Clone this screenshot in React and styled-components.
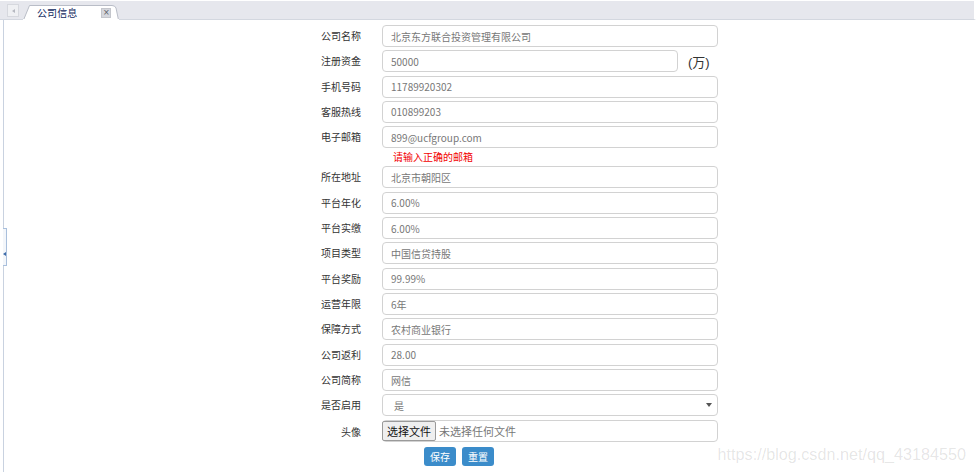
import React from 'react';
import styled, { createGlobalStyle } from 'styled-components';

const GlobalStyle = createGlobalStyle`
  html, body {
    margin: 0;
    padding: 0;
    background: #fff;
  }
  body {
    font-family: "Noto Sans CJK SC", "Noto Sans", sans-serif;
    font-size: 10px;
    color: #333;
  }
`;

const Page = styled.div`
  width: 976px;
  height: 472px;
  display: flex;
  flex-direction: column;
  position: relative;
  overflow: hidden;
`;

const TabBar = styled.div`
  height: 19px;
  margin-top: 1px;
  background: #e6e7ed;
  border-bottom: 1px solid #d3d7df;
  border-right: 2px solid #fff;
  display: flex;
  align-items: flex-end;
  padding-left: 7px;
  box-sizing: border-box;
`;

const ScrollBtn = styled.div`
  width: 10px;
  height: 11px;
  margin-bottom: 2px;
  border: 1px solid #d6d8de;
  background: #eff0f3;
  display: flex;
  align-items: center;
  justify-content: center;
  &::before {
    content: '';
    border-style: solid;
    border-width: 2.5px 3px 2.5px 0;
    border-color: transparent #b5b8c0 transparent transparent;
  }
`;

const Tab = styled.div`
  position: relative;
  width: 96px;
  height: 15px;
  margin-left: 4px;
  margin-bottom: -1px;
  display: flex;
  align-items: center;
  padding-left: 14px;
  box-sizing: border-box;
  svg.shape {
    position: absolute;
    left: 0;
    top: 0;
  }
`;

const TabTitle = styled.span`
  position: relative;
  font-size: 10px;
  line-height: 14px;
  color: #10295e;
  letter-spacing: 0.1px;
`;

const CloseBtn = styled.span`
  position: relative;
  width: 8px;
  height: 8px;
  margin-left: 24px;
  background: #d5d7dd;
  border: 1px solid #c4c6cc;
  display: flex;
  align-items: center;
  justify-content: center;
  font-size: 8px;
  line-height: 8px;
  color: #5a5d66;
  font-family: "DejaVu Sans", sans-serif;
`;

const Body = styled.div`
  flex: 1;
  display: flex;
  position: relative;
`;

const Rail = styled.div`
  width: 3px;
  border-right: 1px solid #c9d2e0;
  flex-shrink: 0;
`;

const RailHandle = styled.div`
  position: absolute;
  left: 3px;
  top: 208px;
  width: 3px;
  height: 36px;
  border: 1px solid #a9bfdc;
  border-left: none;
  background: #f3f6fa;
  &::after {
    content: '';
    position: absolute;
    left: 0;
    top: 23px;
    border-style: solid;
    border-width: 2.5px 3px 2.5px 0;
    border-color: transparent #3d6aa8 transparent transparent;
  }
`;

const Form = styled.form`
  margin: 5px 0 0 277px;
  display: grid;
  grid-template-columns: 80px 336px;
  column-gap: 21px;
  row-gap: 3.33px;
  align-content: start;
`;

const Label = styled.label`
  text-align: right;
  font-size: 10px;
  line-height: 22px;
  color: #333;
  align-self: ${p => (p.top ? 'start' : 'center')};
  margin-top: ${p => (p.top ? '1px' : '0')};
`;

const Field = styled.div`
  display: flex;
  align-items: center;
  gap: 10px;
`;

const Input = styled.div`
  width: ${p => p.w || '336px'};
  height: 22px;
  box-sizing: border-box;
  border: 1px solid #d2d2d2;
  border-radius: 4px;
  padding-left: 8px;
  display: flex;
  align-items: center;
  font-size: 10px;
  color: #777;
  background: #fff;
`;

const Unit = styled.span`
  font-size: 13px;
  color: #333;
  font-family: "Liberation Sans", "Noto Sans CJK SC", sans-serif;
`;

const ErrorText = styled.div`
  grid-column: 2;
  padding-left: 11px;
  height: 11.5px;
  margin-top: -1px;
  margin-bottom: 1px;
  font-size: 10px;
  line-height: 11px;
  color: #f20000;
`;

const Select = styled(Input)`
  padding-left: 11px;
  justify-content: space-between;
  padding-right: 5px;
  &::after {
    content: '';
    border-style: solid;
    border-width: 4px 3px 0 3px;
    border-color: #555 transparent transparent transparent;
  }
`;

const FileBox = styled(Input)`
  padding-left: 0;
  gap: 3px;
`;

const FileBtn = styled.span`
  height: 20px;
  box-sizing: border-box;
  padding: 0 4px;
  margin-left: -1px;
  display: flex;
  align-items: center;
  background: #efefef;
  border: 1px solid #9a9a9a;
  border-radius: 2px;
  font-size: 11px;
  color: #111;
`;

const FileHint = styled.span`
  font-size: 11px;
  color: #777;
`;

const Actions = styled.div`
  grid-column: 2;
  display: flex;
  gap: 6px;
  padding-left: 42px;
  margin-top: 1px;
`;

const Button = styled.button`
  height: 19px;
  padding: 0 6px;
  border: none;
  border-radius: 3px;
  background: #3b8cca;
  color: #fff;
  font-family: inherit;
  font-size: 10px;
  line-height: 19px;
`;

const Watermark = styled.div`
  position: absolute;
  right: 10px;
  bottom: 8px;
  font-family: "Liberation Sans", Arial, sans-serif;
  font-size: 16.2px;
  color: rgba(0, 0, 0, 0.11);
`;

const rows = [
  ['公司名称', '北京东方联合投资管理有限公司'],
  ['注册资金', '50000', 'unit'],
  ['手机号码', '11789920302'],
  ['客服热线', '010899203'],
  ['电子邮箱', '899@ucfgroup.com', 'error'],
  ['所在地址', '北京市朝阳区'],
  ['平台年化', '6.00%'],
  ['平台实缴', '6.00%'],
  ['项目类型', '中国信贷持股'],
  ['平台奖励', '99.99%'],
  ['运营年限', '6年'],
  ['保障方式', '农村商业银行'],
  ['公司返利', '28.00'],
  ['公司简称', '网信'],
];

export default function App() {
  return (
    <Page>
      <GlobalStyle />
      <TabBar>
        <ScrollBtn />
        <Tab>
          <svg className="shape" width="96" height="15" viewBox="0 0 96 15">
            <path d="M0.5 15 L6.5 0.5 L89 0.5 Q92 0.5 93 3 L95.5 15 Z" fill="#fff" stroke="#b9bdc7" />
            <rect x="0" y="14" width="96" height="1" fill="#fff" />
          </svg>
          <TabTitle>公司信息</TabTitle>
          <CloseBtn>×</CloseBtn>
        </Tab>
      </TabBar>
      <Body>
        <Rail />
        <RailHandle />
        <Form>
          {rows.map(([label, value, kind]) => (
            <React.Fragment key={label}>
              <Label>{label}</Label>
              <Field>
                <Input w={kind === 'unit' ? '296px' : undefined}>{value}</Input>
                {kind === 'unit' && <Unit>(万)</Unit>}
              </Field>
              {kind === 'error' && <ErrorText>请输入正确的邮箱</ErrorText>}
            </React.Fragment>
          ))}
          <Label>是否启用</Label>
          <Field>
            <Select>是</Select>
          </Field>
          <Label top>头像</Label>
          <Field>
            <FileBox>
              <FileBtn>选择文件</FileBtn>
              <FileHint>未选择任何文件</FileHint>
            </FileBox>
          </Field>
          <Actions>
            <Button type="button">保存</Button>
            <Button type="button">重置</Button>
          </Actions>
        </Form>
        <Watermark>https://blog.csdn.net/qq_43184550</Watermark>
      </Body>
    </Page>
  );
}
